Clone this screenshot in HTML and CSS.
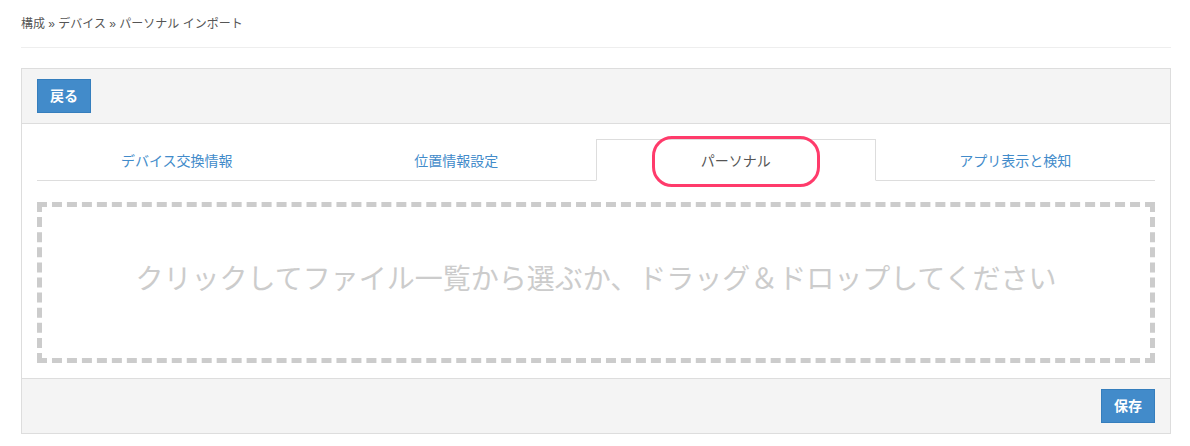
FILE: index.html
```html
<!DOCTYPE html>
<html lang="ja">
<head>
  <meta charset="UTF-8" />
  <title>パーソナル インポート</title>
  <link rel="stylesheet" href="styles.css">
</head>
<body>

<div class="page">
  <div class="breadcrumb">構成 » デバイス » パーソナル インポート</div>
  <hr class="rule" />

  <div class="panel">
    <div class="panel-head">
      <button class="btn">戻る</button>
    </div>
    <div class="panel-body">
      <ul class="tabs">
        <li class="tab"><a href="#">デバイス交換情報</a></li>
        <li class="tab"><a href="#">位置情報設定</a></li>
        <li class="tab active"><a href="#">パーソナル</a><span class="mark"></span></li>
        <li class="tab"><a href="#">アプリ表示と検知</a></li>
      </ul>
      <div class="dropzone">クリックしてファイル一覧から選ぶか、ドラッグ＆ドロップしてください</div>
    </div>
    <div class="panel-foot">
      <button class="btn">保存</button>
    </div>
  </div>
</div>

</body>
</html>
```

FILE: styles.css
```css
body {
  margin: 0;
  background: #fff;
  font-family: "Liberation Sans", "Noto Sans CJK JP", sans-serif;
  color: #555;
}
.page {
  padding: 15px 19px 0 21px;
}
.breadcrumb {
  font-size: 12px;
  line-height: 16px;
  padding-top: 1px;
  color: #555;
}
.rule {
  border: 0;
  border-top: 1px solid #eee;
  margin: 15px 0 20px;
}
.panel {
  width: 1148px;
  border: 1px solid #ddd;
}
.panel-head, .panel-foot {
  background: #f4f4f4;
  padding: 10px 15px;
  display: flex;
}
.panel-head {
  border-bottom: 1px solid #ddd;
}
.panel-foot {
  border-top: 1px solid #ddd;
  justify-content: flex-end;
}
.btn {
  font-family: inherit;
  font-size: 14px;
  font-weight: bold;
  line-height: 20px;
  color: #fff;
  background: #428bca;
  border: 1px solid #357ebd;
  border-radius: 0;
  padding: 6px 12px;
  height: 34px;
}
.panel-body {
  padding: 15px 15px 15px;
}
.tabs {
  list-style: none;
  margin: 0;
  padding: 0;
  display: flex;
  border-bottom: 1px solid #ddd;
}
.tab {
  flex: 1;
  position: relative;
  margin-bottom: -1px;
  border: 1px solid transparent;
  height: 40px;
  display: flex;
  align-items: center;
  justify-content: center;
}
.tab a {
  font-size: 14px;
  color: #428bca;
  text-decoration: none;
}
.tab.active {
  border-color: #ddd;
  border-bottom-color: #fff;
  background: #fff;
}
.tab.active a {
  color: #555;
}
.mark {
  position: absolute;
  left: 50%;
  top: -4px;
  width: 162px;
  height: 45px;
  margin-left: -84px;
  border: 3px solid #ff3b6b;
  border-radius: 20px;
}
.dropzone {
  margin-top: 21px;
  height: 145px;
  padding-bottom: 6px;
  border: 5px dashed #ccc;
  display: flex;
  align-items: center;
  justify-content: center;
  font-size: 28px;
  line-height: 34px;
  color: #ccc;
}
```
